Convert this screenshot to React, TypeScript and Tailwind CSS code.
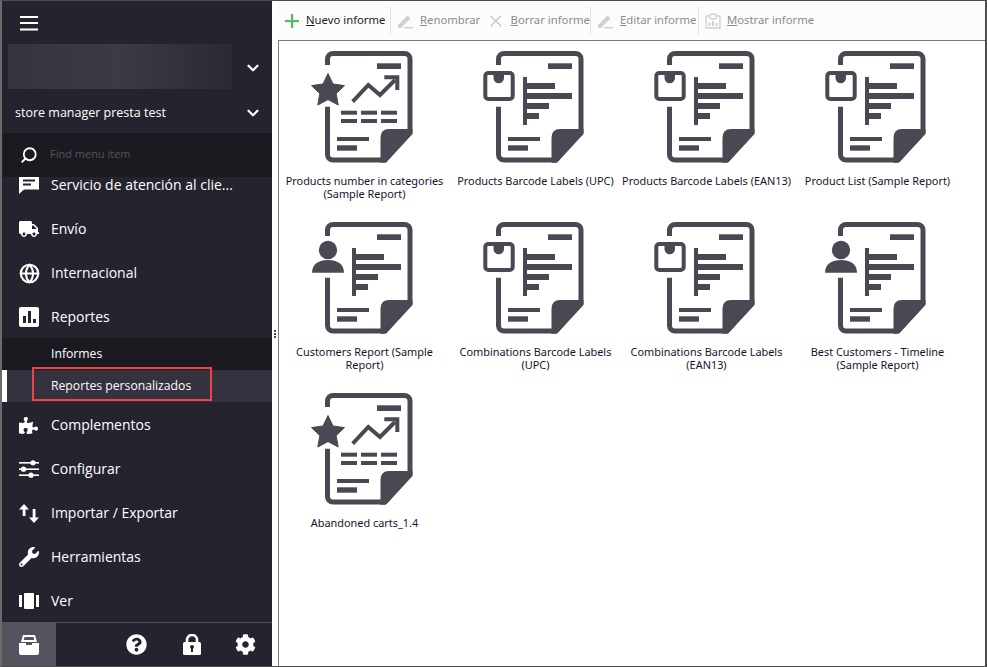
import React from 'react';
import { ChevronDown, Search, Globe } from 'lucide-react';
import { FaTruck, FaPuzzlePiece, FaWrench, FaQuestionCircle, FaCog } from 'react-icons/fa';

const ink = '#4a4953';
const side = '#25242e';

const Star = () => (
  <path d="M17 25.5 L22 36 L33.5 37.6 L25.2 45.6 L27.2 57 L17 51.6 L6.8 57 L8.8 45.6 L0.5 37.6 L12 36 Z" fill={ink} stroke={ink} strokeWidth="1" strokeLinejoin="round" />
);

const Box = () => (
  <>
    <rect x="3.3" y="25" width="27.4" height="26" rx="3" fill="#fff" stroke={ink} strokeWidth="4" />
    <path d="M11.5 25h10.5v5a5 5 0 0 1-10.5 0z" fill={ink} />
  </>
);

const Person = () => (
  <>
    <circle cx="17" cy="31" r="9.2" fill={ink} />
    <path d="M1 53.7C1 45 8 41 17 41s16 4 16 12.7z" fill={ink} />
  </>
);

const Bars = () => (
  <g fill={ink}>
    <rect x="41" y="29" width="4" height="48" />
    <rect x="45" y="35" width="28" height="6" />
    <rect x="45" y="45" width="45" height="6" />
    <rect x="45" y="55" width="22" height="6" />
    <rect x="45" y="65" width="12" height="6" />
  </g>
);

const Trend = () => (
  <g>
    <path d="M41.7 53.7 57.3 37 69 47 84 32" fill="none" stroke={ink} strokeWidth="4" />
    <path d="M73.3 29.3H86.3V42" fill="none" stroke={ink} strokeWidth="4" />
    <g fill={ink}>
      <rect x="30" y="62.7" width="16" height="4" />
      <rect x="50" y="62.7" width="16" height="4" />
      <rect x="70" y="62.7" width="16" height="4" />
      <rect x="30" y="71" width="16" height="4" />
      <rect x="50" y="71" width="16" height="4" />
      <rect x="70" y="71" width="16" height="4" />
    </g>
  </g>
);

function ReportIcon({ kind }: { kind: string }) {
  return (
    <svg width="104" height="118" viewBox="0 0 104 118" className="ml-[32px] mt-[7px] shrink-0">
      <path d="M16.5 17V11a5.5 5.5 0 0 1 5.5-5.5H93.5A5.5 5.5 0 0 1 99 11V84L74 112H22a5.5 5.5 0 0 1-5.5-5.5V58.7" fill="none" stroke={ink} strokeWidth="5" />
      <path d="M69.5 114.7V90Q69.5 81 78 81H101.5V86L76 113.5Q75 114.7 72 114.7Z" fill={ink} />
      <g fill={ink}>
        <rect x="66" y="15.3" width="24" height="5.7" />
        <rect x="26" y="89" width="32" height="4" />
        <rect x="26" y="97.3" width="20" height="5.4" />
      </g>
      {kind === 'star' && <><Star /><Trend /></>}
      {kind === 'box' && <><Box /><Bars /></>}
      {kind === 'person' && <><Person /><Bars /></>}
    </svg>
  );
}

const reports = [
  { kind: 'star', name: 'Products number in categories (Sample Report)' },
  { kind: 'box', name: 'Products Barcode Labels (UPC)' },
  { kind: 'box', name: 'Products Barcode Labels (EAN13)' },
  { kind: 'box', name: 'Product List (Sample Report)' },
  { kind: 'person', name: 'Customers Report (Sample Report)' },
  { kind: 'box', name: 'Combinations Barcode Labels (UPC)' },
  { kind: 'box', name: 'Combinations Barcode Labels (EAN13)' },
  { kind: 'person', name: 'Best Customers - Timeline (Sample Report)' },
  { kind: 'star', name: 'Abandoned carts_1.4' },
];

const Hamburger = () => (
  <svg width="18" height="15" viewBox="0 0 18 15" fill="#fff">
    <rect y="0" width="18" height="2" />
    <rect y="6" width="18" height="2" />
    <rect y="12.5" width="18" height="2" />
  </svg>
);

const Bubble = () => (
  <svg width="20" height="18" viewBox="0 0 20 18">
    <path d="M0 0H20V13.5H5L0 18Z" fill="#fff" />
    <rect x="4" y="3.5" width="12" height="2" fill={side} />
    <rect x="4" y="7.5" width="8" height="2" fill={side} />
  </svg>
);

const ChartBox = () => (
  <svg width="20" height="20" viewBox="0 0 20 20">
    <rect width="20" height="20" rx="2" fill="#fff" />
    <rect x="4" y="9" width="3" height="7" fill={side} />
    <rect x="9" y="4" width="3" height="12" fill={side} />
    <rect x="14" y="12" width="3" height="4" fill={side} />
  </svg>
);

const Sliders = () => (
  <svg width="20" height="18" viewBox="0 0 20 18" fill="#fff">
    <rect y="2" width="20" height="1.6" />
    <rect y="8.4" width="20" height="1.6" />
    <rect y="14.4" width="20" height="1.6" />
    <circle cx="14" cy="2.8" r="2.6" />
    <circle cx="4.5" cy="9.2" r="2.6" />
    <circle cx="12" cy="15.2" r="2.6" />
  </svg>
);

const ImportExport = () => (
  <svg width="20" height="19" viewBox="0 0 20 19" fill="#fff">
    <path d="M5 0 10 5.5H6.5V12H3.7V5.5H0Z" />
    <path d="M15 19 20 13.5H16.5V5H13.7V13.5H10Z" />
  </svg>
);

const Ver = () => (
  <svg width="20" height="16" viewBox="0 0 20 16" fill="#fff">
    <rect x="0" y="2" width="3" height="12" />
    <rect x="5" y="0" width="10" height="16" rx="1" />
    <rect x="17" y="2" width="3" height="12" />
  </svg>
);

const Tray = () => (
  <svg width="20" height="20" viewBox="0 0 20 20" fill="#fff">
    <path d="M4 0H16L18 7H2ZM5.5 2 4.7 5H15.3L14.5 2Z" fillRule="evenodd" />
    <path d="M0 8H7V10H13V8H20V18a2 2 0 0 1-2 2H2a2 2 0 0 1-2-2Z" />
  </svg>
);

const Padlock = () => (
  <svg width="18" height="21" viewBox="0 0 18 21">
    <path d="M4 9V6a5 5 0 0 1 10 0v3" fill="none" stroke="#fff" strokeWidth="2.6" />
    <rect y="8" width="18" height="13" rx="1.5" fill="#fff" />
    <circle cx="9" cy="13" r="2" fill={side} />
    <rect x="8" y="13" width="2" height="5" fill={side} />
  </svg>
);

const PlusIcon = () => (
  <svg width="14" height="14" viewBox="0 0 14 14" fill="#5cb860">
    <rect x="6" width="2.2" height="14" />
    <rect y="6" width="14" height="2.2" />
  </svg>
);

const CrossIcon = () => (
  <svg width="12" height="12" viewBox="0 0 12 12" stroke="#c8c8c8" strokeWidth="1.6">
    <path d="M0.5 0.5 11.5 11.5M11.5 0.5 0.5 11.5" />
  </svg>
);

function Pencil() {
  return (
    <svg width="16" height="16" viewBox="0 0 16 16" fill="#d0d0d0">
      <path d="M1 12 10.5 2.5 13.5 5.5 4 15H1z" />
      <rect x="7" y="14" width="9" height="1.5" />
    </svg>
  );
}

function Show() {
  return (
    <svg width="16" height="16" viewBox="0 0 16 16" fill="none" stroke="#cfcfcf" strokeWidth="1.3">
      <path d="M1 3h3M12 3h3v12H1V3" />
      <ellipse cx="8" cy="3.5" rx="3.5" ry="2.5" />
      <path d="M4.5 13V10M8 13V8M11.5 13v-3" strokeWidth="2" />
    </svg>
  );
}

function NavItem({ icon, label }: { icon: React.ReactNode; label: string }) {
  return (
    <div className="h-[44px] flex items-center shrink-0">
      <div className="w-[49px] pl-[17px] flex items-center shrink-0">{icon}</div>
      <span className="-mt-[2px] text-[14px] text-white whitespace-nowrap">{label}</span>
    </div>
  );
}

function ToolButton({ icon, first, rest, width, active }: { icon: React.ReactNode; first: string; rest: string; width: string; active?: boolean }) {
  return (
    <div className={`flex items-center text-[11.3px] ${width} ${active ? 'text-[#1c1c1c]' : 'text-[#8c8c8c]'}`}>
      {icon}
      <span className="whitespace-nowrap"><span className="underline">{first}</span>{rest}</span>
    </div>
  );
}

const Sep = () => <div className="w-px h-[28px] bg-[#e2e2e2] shrink-0" />;

export default function App() {
  return (
    <div className="w-[987px] h-[667px] flex bg-white overflow-hidden border-t border-t-[#4d4d4d] border-b border-b-[#4d4d4d] border-l-2 border-l-[#6b6b6b] border-r-2 border-r-[#4d4d4d] font-['Open_Sans',sans-serif]">
      <aside className="w-[270px] shrink-0 flex flex-col bg-[#25242e]">
        <div className="h-[43px] pl-[18px] pt-[15px] shrink-0">
          <Hamburger />
        </div>
        <div className="h-[45px] flex items-center shrink-0">
          <div className="ml-[6px] w-[224px] h-[45px] bg-gradient-to-r from-[#36353e] via-[#3c3b44] to-[#2b2a33]" />
          <ChevronDown size={18} color="#fff" strokeWidth={3} className="ml-[12px] mt-[2px]" />
        </div>
        <div className="h-[44px] flex items-center justify-between pl-[13px] pr-[10px] pt-[4px] shrink-0">
          <span className="text-[12.5px] text-white">store manager presta test</span>
          <ChevronDown size={18} color="#fff" strokeWidth={3} />
        </div>
        <div className="h-[44px] ml-px flex items-center bg-[#1b1a21] shrink-0">
          <Search size={18} color="#fff" strokeWidth={2.4} className="ml-[17px] -scale-x-100" />
          <span className="ml-[12px] -mt-px text-[11px] text-[#55545c]">Find menu item</span>
        </div>
        <div className="flex-1 overflow-hidden flex flex-col">
          <div className="-mt-[14px] flex flex-col">
            <NavItem icon={<Bubble />} label="Servicio de atención al clie..." />
            <NavItem icon={<FaTruck size={20} color="#fff" />} label="Envío" />
            <NavItem icon={<Globe size={21} color="#fff" strokeWidth={2.4} />} label="Internacional" />
            <NavItem icon={<ChartBox />} label="Reportes" />
            <div className="h-[32px] -mt-px pt-px bg-[#1b1a21] flex items-center pl-[49px] text-[12.2px] text-white">Informes</div>
            <div className="relative h-[32px] pt-px bg-[#33323e] flex items-center pl-[44px] text-[12.2px] text-white border-l-[5px] border-white">
              Reportes personalizados
              <div className="absolute left-[25px] -top-[3px] w-[180px] h-[34px] border-2 border-[#ef4444]" />
            </div>
            <div className="h-px shrink-0" />
            <NavItem icon={<FaPuzzlePiece size={19} color="#fff" />} label="Complementos" />
            <NavItem icon={<Sliders />} label="Configurar" />
            <NavItem icon={<ImportExport />} label="Importar / Exportar" />
            <NavItem icon={<FaWrench size={20} color="#fff" />} label="Herramientas" />
            <NavItem icon={<Ver />} label="Ver" />
          </div>
        </div>
        <div className="h-[44px] border-t border-[#55545c] flex items-center shrink-0">
          <div className="w-[54px] h-full bg-[#54535e] flex items-center justify-center">
            <Tray />
          </div>
          <FaQuestionCircle size={21} color="#fff" className="ml-[70px]" />
          <div className="ml-[36px]"><Padlock /></div>
          <FaCog size={21} color="#fff" className="ml-[34px]" />
        </div>
      </aside>

      <div className="w-[6px] shrink-0 bg-white flex items-center justify-center">
        <div className="flex flex-col gap-px">
          <div className="w-[2px] h-[2px] bg-[#444]" />
          <div className="w-[2px] h-[2px] bg-[#444]" />
          <div className="w-[2px] h-[2px] bg-[#444]" />
        </div>
      </div>

      <main className="flex-1 flex flex-col min-w-0 font-['Noto_Sans',sans-serif]">
        <div className="h-[39px] flex items-center pl-[7px] bg-[#fcfcfc] shrink-0">
          <ToolButton active first="N" rest="uevo informe" width="w-[105px] gap-[7px]" icon={<PlusIcon />} />
          <Sep />
          <div className="w-[6px]" />
          <ToolButton first="R" rest="enombrar" width="w-[93px] gap-[7px]" icon={<Pencil />} />
          <ToolButton first="B" rest="orrar informe" width="w-[100px] gap-[9px]" icon={<CrossIcon />} />
          <Sep />
          <div className="w-[6px]" />
          <ToolButton first="E" rest="ditar informe" width="w-[101px] gap-[7px]" icon={<Pencil />} />
          <Sep />
          <div className="w-[6px]" />
          <ToolButton first="M" rest="ostrar informe" width="w-[110px] gap-[6px]" icon={<Show />} />
        </div>
        <div className="flex-1 border-t border-l border-[#7a7a7a] bg-white grid grid-cols-[repeat(4,171px)] auto-rows-[171px] content-start">
          {reports.map((r, i) => (
            <div key={i} className="flex flex-col h-[171px]">
              <ReportIcon kind={r.kind} />
              <div className="mt-[8px] text-center text-[10.9px] leading-[13px] text-[#14142b]">{r.name}</div>
            </div>
          ))}
        </div>
      </main>
    </div>
  );
}
